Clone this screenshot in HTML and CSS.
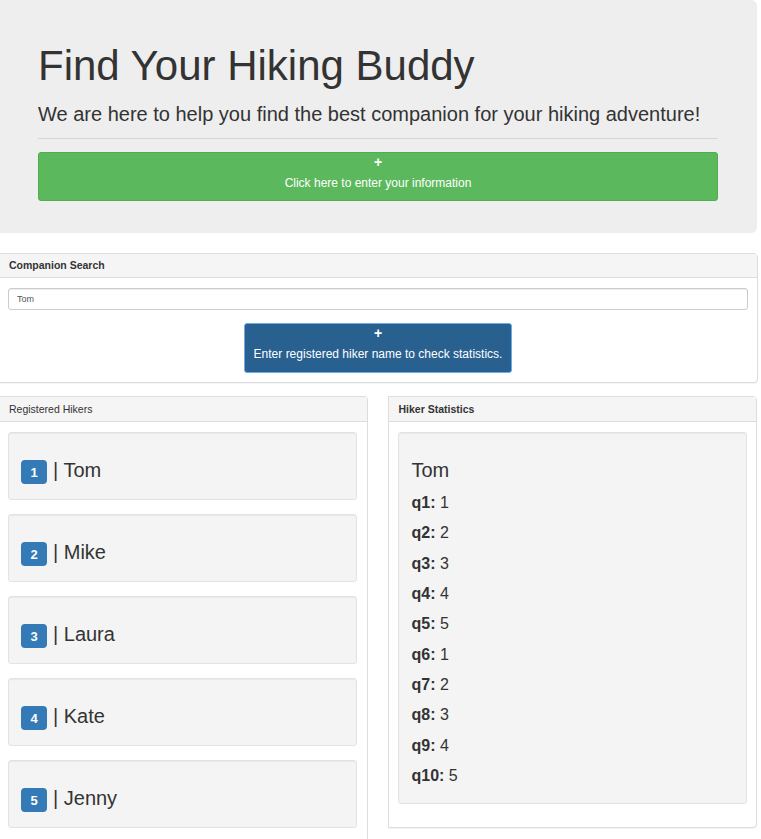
FILE: index.html
```html
<!DOCTYPE html>
<html>
<head>
<meta charset="utf-8">
<link rel="stylesheet" href="styles.css">
</head>
<body>
<div class="page">
  <div class="jumbotron">
    <h1 class="title">Find Your Hiking Buddy</h1>
    <p class="lead">We are here to help you find the best companion for your hiking adventure!</p>
    <hr class="rule">
    <button class="btn btn-green"><span class="plus">+</span><span class="btn-text">Click here to enter your information</span></button>
  </div>

  <div class="panel search-panel">
    <div class="panel-heading bold">Companion Search</div>
    <div class="panel-body search-body">
      <input class="input" type="text" value="Tom">
      <button class="btn btn-blue"><span class="plus">+</span><span class="btn-text">Enter registered hiker name to check statistics.</span></button>
    </div>
  </div>

  <div class="columns">
    <div class="panel list-panel">
      <div class="panel-heading col-heading">Registered Hikers</div>
      <div class="panel-body list-body">
        <div class="well hiker"><span class="badge">1</span><span class="name">| Tom</span></div>
        <div class="well hiker"><span class="badge">2</span><span class="name">| Mike</span></div>
        <div class="well hiker"><span class="badge">3</span><span class="name">| Laura</span></div>
        <div class="well hiker"><span class="badge">4</span><span class="name">| Kate</span></div>
        <div class="well hiker"><span class="badge">5</span><span class="name">| Jenny</span></div>
      </div>
    </div>
    <div class="panel stats-panel">
      <div class="panel-heading col-heading bold stats-heading">Hiker Statistics</div>
      <div class="panel-body stats-body">
        <div class="well stats">
          <div class="stats-name">Tom</div>
          <p class="stat"><b>q1:</b> 1</p>
          <p class="stat"><b>q2:</b> 2</p>
          <p class="stat"><b>q3:</b> 3</p>
          <p class="stat"><b>q4:</b> 4</p>
          <p class="stat"><b>q5:</b> 5</p>
          <p class="stat"><b>q6:</b> 1</p>
          <p class="stat"><b>q7:</b> 2</p>
          <p class="stat"><b>q8:</b> 3</p>
          <p class="stat"><b>q9:</b> 4</p>
          <p class="stat"><b>q10:</b> 5</p>
        </div>
      </div>
    </div>
  </div>
</div>
</body>
</html>
```
FILE: styles.css
```css
* { box-sizing: border-box; }
html, body { margin: 0; padding: 0; background: #fff; }
body {
  font-family: "Liberation Sans", Arial, sans-serif;
  color: #333;
  font-size: 10.5px;
  overflow: hidden;
}
.page {
  width: 758px;
  margin-left: -1px;
}
.jumbotron {
  background: #eee;
  margin-left: 1px;
  width: 757px;
  height: 233px;
  padding: 43px 39px 0 38px;
  border-radius: 0 6px 6px 0;
}
.title {
  margin: 0;
  font-size: 42px;
  line-height: 46px;
  font-weight: 400;
  color: #333;
}
.lead {
  margin: 11px 0 0;
  font-size: 20px;
  line-height: 28px;
  font-weight: 400;
}
.rule {
  margin: 10px 0 0;
  border: 0;
  border-top: 1px solid #d6d6d6;
  height: 0;
}
.btn {
  display: flex;
  flex-direction: column;
  align-items: center;
  font-family: "Liberation Sans", Arial, sans-serif;
  color: #fff;
  font-size: 12px;
  line-height: 20px;
  white-space: nowrap;
  cursor: pointer;
}
.plus {
  font-weight: 700;
  font-size: 14px;
  line-height: 18px;
}
.btn-text {
  line-height: 20px;
  margin-top: 2px;
}
.btn-green {
  margin-top: 13px;
  width: 680px;
  height: 49px;
  padding: 0 12px;
  background: #5cb85c;
  border: 1px solid #4cae4c;
  border-radius: 3px;
}
.panel {
  background: #fff;
  border: 1px solid #ddd;
  border-radius: 0 4px 4px 0;
  box-shadow: 0 1px 1px rgba(0,0,0,.05);
}
.panel-heading {
  background: #f5f5f5;
  border-bottom: 1px solid #ddd;
  height: 24px;
  padding: 0 9px;
  line-height: 23px;
  font-size: 10.5px;
  color: #333;
}
.col-heading {
  height: 25px;
  line-height: 24px;
}
.bold { font-weight: 700; }
.search-panel {
  margin-top: 20px;
  width: 759px;
}
.search-body {
  padding: 10px 9px 9px 8px;
  display: flex;
  flex-direction: column;
  align-items: center;
}
.input {
  width: 100%;
  height: 22px;
  border: 1px solid #ccc;
  border-radius: 3px;
  padding: 0 8px;
  font-family: "Liberation Sans", Arial, sans-serif;
  font-size: 9px;
  color: #555;
  box-shadow: inset 0 1px 1px rgba(0,0,0,.075);
}
.btn-blue {
  margin-top: 13px;
  width: 268px;
  height: 50px;
  padding: 0 4px;
  background: #286090;
  border: 1px solid #70a9ea;
  border-radius: 3px;
}
.columns {
  margin-top: 13px;
  display: flex;
  align-items: flex-start;
  gap: 20px;
}
.list-panel {
  width: 369px;
  height: 460px;
  border-bottom: 0;
}
.list-body {
  padding: 10px 10px 0 8px;
}
.well {
  background: #f4f4f4;
  border: 1px solid #e3e3e3;
  border-radius: 3px;
  box-shadow: inset 0 1px 1px rgba(0,0,0,.05);
}
.hiker {
  height: 68px;
  margin-bottom: 14px;
  padding: 27px 12px 0;
  display: flex;
  align-items: flex-start;
}
.badge {
  display: inline-flex;
  align-items: center;
  justify-content: center;
  width: 26px;
  height: 24px;
  background: #337ab7;
  color: #fff;
  border-radius: 4px;
  font-weight: 700;
  font-size: 13px;
}
.name {
  margin-left: 6px;
  margin-top: -2px;
  font-size: 20px;
  line-height: 24px;
}
.stats-panel {
  width: 370px;
}
.stats-heading { padding-left: 10px; }
.stats-body {
  padding: 10px 9px 23px 9px;
}
.stats {
  padding: 25px 12px 7px 13px;
}
.stats-name {
  font-size: 20px;
  line-height: 24px;
  margin-bottom: 11px;
}
.stat {
  margin: 0 0 10px;
  font-size: 16px;
  line-height: 20.33px;
}
.stat b { font-weight: 700; }
```
